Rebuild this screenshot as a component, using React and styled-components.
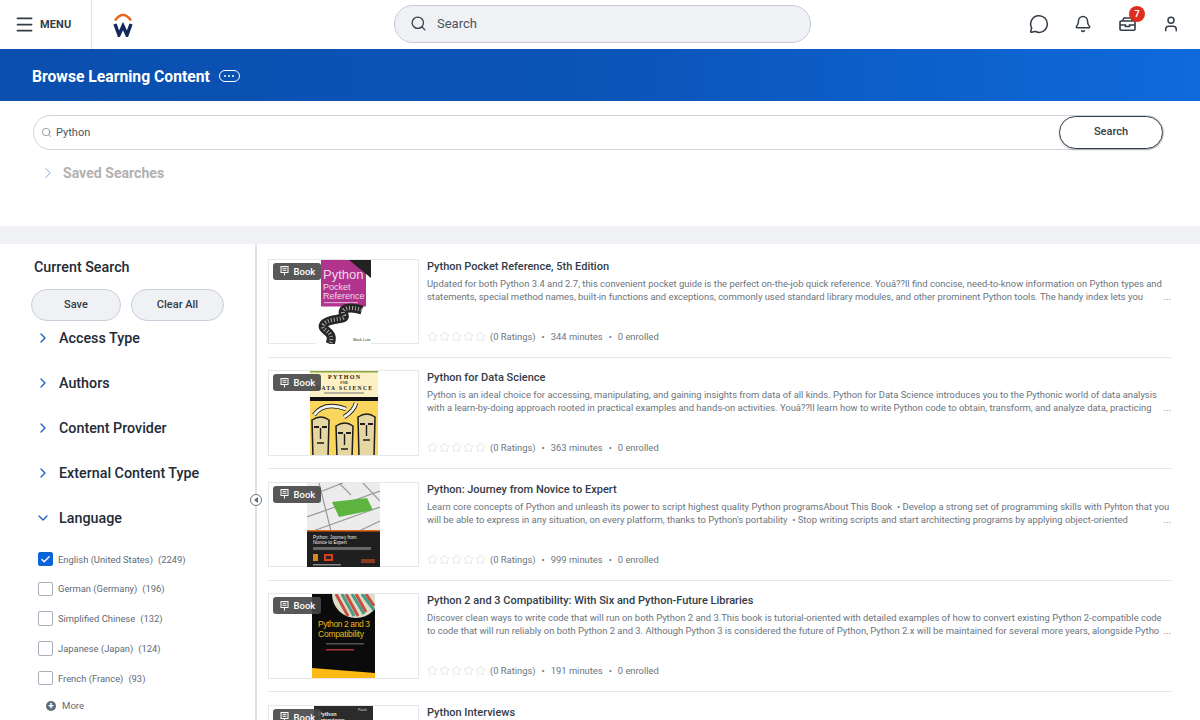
import React from "react";
import styled, { createGlobalStyle } from "styled-components";
import { Menu, Search, MessageCircle, Bell, User, ChevronRight, ChevronDown, Check, Star } from "lucide-react";

const GlobalStyle = createGlobalStyle`
  html, body {
    margin: 0;
    padding: 0;
    background: #fff;
    font-family: Roboto, "Liberation Sans", sans-serif;
    color: #333;
  }
  * { box-sizing: border-box; }
`;

const Page = styled.div`
  width: 1200px;
  height: 720px;
  overflow: hidden;
  display: flex;
  flex-direction: column;
`;

const TopBar = styled.header`
  height: 49px;
  flex: none;
  display: flex;
  align-items: center;
  background: #fff;
  padding-bottom: 2px;
`;

const MenuButton = styled.div`
  width: 92px;
  height: 49px;
  margin-top: 2px;
  padding-left: 14px;
  display: flex;
  align-items: center;
  gap: 5px;
  border-right: 1px solid #dfe2e8;
  font-size: 11px;
  font-weight: 700;
  letter-spacing: 0.1px;
  color: #333c47;
  span,
  svg {
    margin-bottom: 1px;
  }
`;

const LogoWrap = styled.div`
  width: 62px;
  display: flex;
  justify-content: center;
  padding-top: 2px;
`;

const TopSearch = styled.div`
  margin-left: 240px;
  width: 417px;
  height: 38px;
  border-radius: 19px;
  background: #f0f1f5;
  border: 1px solid #c3cad6;
  display: flex;
  align-items: center;
  gap: 10px;
  padding-left: 15px;
  font-size: 13px;
  color: #4a5561;
`;

const TopIcons = styled.div`
  margin-left: 218px;
  display: flex;
  align-items: center;
  gap: 24px;
  color: #333c47;
`;

const IconSlot = styled.div`
  width: 20px;
  height: 20px;
  display: flex;
  align-items: center;
  justify-content: center;
  position: relative;
`;

const Badge = styled.span`
  position: absolute;
  top: -8px;
  right: -8px;
  width: 16px;
  height: 16px;
  border-radius: 50%;
  background: #de2e21;
  color: #fff;
  font-size: 9px;
  font-weight: 700;
  display: flex;
  align-items: center;
  justify-content: center;
`;

const TitleBand = styled.div`
  height: 52px;
  flex: none;
  background: linear-gradient(90deg, #0a4fae 0%, #0b54b8 50%, #0f6adb 100%);
  display: flex;
  align-items: center;
  gap: 9px;
  padding: 2px 0 0 32px;
  color: #fff;
`;

const PageTitle = styled.h1`
  margin: 0;
  font-size: 15.7px;
  font-weight: 700;
`;

const MorePill = styled.span`
  width: 21px;
  height: 12px;
  border: 1px solid #fff;
  border-radius: 6px;
  display: flex;
  align-items: center;
  justify-content: center;
  gap: 2px;
  i {
    width: 2px;
    height: 2px;
    border-radius: 50%;
    background: #fff;
  }
`;

const SearchArea = styled.section`
  height: 125px;
  flex: none;
  padding: 14px 36px 0 33px;
`;

const SearchInput = styled.div`
  height: 35px;
  border: 1px solid #ced3dd;
  border-radius: 18px;
  display: flex;
  align-items: center;
  padding-left: 7px;
  font-size: 11px;
  color: #4a5561;
  gap: 4px;
`;

const Query = styled.span`
  flex: 1;
`;

const SearchButton = styled.button`
  width: 104px;
  height: 33px;
  border: 1px solid #333c47;
  border-radius: 17px;
  background: #fff;
  box-shadow: 0 1px 2px rgba(0, 0, 0, 0.2);
  font: 500 11px Roboto, sans-serif;
  color: #333c47;
  padding: 0 0 2px;
`;

const SavedSearches = styled.div`
  display: flex;
  align-items: center;
  gap: 6.5px;
  margin: 14px 0 0 5.5px;
  font-size: 14.1px;
  font-weight: 700;
  color: #b1b1b1;
`;

const Strip = styled.div`
  height: 18px;
  flex: none;
  background: #f0f1f5;
`;

const Body = styled.div`
  flex: 1;
  min-height: 0;
  display: flex;
  position: relative;
`;

const Sidebar = styled.aside`
  width: 257px;
  flex: none;
  border-right: 2px solid #dfe1e5;
  padding: 15px 0 0 31px;
  overflow: hidden;
`;

const SidebarTitle = styled.h2`
  margin: 0 0 13px 3px;
  font-size: 14.3px;
  font-weight: 500;
  line-height: 17px;
  color: #222b36;
`;

const ButtonRow = styled.div`
  display: flex;
  gap: 10px;
  margin-bottom: 5px;
`;

const PillButton = styled.button`
  width: ${(p) => p.$width}px;
  height: 32px;
  border-radius: 16px;
  border: 1px solid #c9cfda;
  background: #f0f1f5;
  font: 500 11px Roboto, sans-serif;
  color: #333c47;
  padding: 0 0 2px;
`;

const FacetGroup = styled.div`
  display: flex;
  flex-direction: column;
  gap: 21px;
`;

const FacetHead = styled.div`
  height: 24px;
  display: flex;
  align-items: center;
  gap: 8.5px;
  padding-left: 3.5px;
  font-size: 14.3px;
  font-weight: 500;
  color: #222b36;
  svg {
    color: #1a62c5;
  }
`;

const FacetList = styled.div`
  margin-top: 19px;
  display: flex;
  flex-direction: column;
  gap: 9.8px;
  padding-left: 7px;
`;

const FacetItem = styled.div`
  height: 20px;
  display: flex;
  align-items: center;
  gap: 5px;
  font-size: 9.4px;
  color: #5e6a75;
`;

const CheckBox = styled.span`
  width: 14.5px;
  height: 14.5px;
  margin-right: 0.5px;
  border-radius: 2px;
  border: 1px solid ${(p) => (p.$checked ? "#0b64d8" : "#a8b0bb")};
  background: ${(p) => (p.$checked ? "#0b64d8" : "#fff")};
  color: #fff;
  display: flex;
  align-items: center;
  justify-content: center;
`;

const MoreLink = styled.div`
  margin: 12px 0 0 15px;
  display: flex;
  align-items: center;
  gap: 6px;
  font-size: 9.6px;
  line-height: 12px;
  color: #5e6a75;
`;

const PlusDot = styled.span`
  width: 10px;
  height: 10px;
  border-radius: 50%;
  background: #5e6a75;
  color: #fff;
  font-size: 10px;
  font-weight: 700;
  line-height: 10px;
  text-align: center;
`;

const Collapse = styled.div`
  position: absolute;
  left: 250px;
  top: 250px;
  width: 12px;
  height: 12px;
  border-radius: 50%;
  border: 1px solid #6b7580;
  background: #fff;
  display: flex;
  align-items: center;
  justify-content: center;
  &::before {
    content: "";
    border: 3px solid transparent;
    border-right: 4px solid #5e6a75;
    border-left: 0;
  }
`;

const Results = styled.main`
  flex: 1;
  padding: 14.8px 29px 0 11px;
  overflow: hidden;
`;

const Row = styled.article`
  display: flex;
  gap: 8px;
  height: 99px;
  margin-bottom: 12.5px;
  border-bottom: 1px solid #e6e8ec;
`;

const Thumb = styled.div`
  width: 151px;
  height: 85.5px;
  flex: none;
  border: 1px solid #e6e8ec;
  display: flex;
  justify-content: center;
  position: relative;
  svg {
    display: block;
  }
`;

const BookTag = styled.span`
  position: absolute;
  top: 3px;
  left: 4px;
  width: 48px;
  height: 17px;
  border-radius: 3px;
  background: rgba(70, 70, 70, 0.9);
  color: #fff;
  display: flex;
  align-items: center;
  gap: 4.5px;
  padding-left: 7px;
  font-size: 9.5px;
  font-weight: 500;
`;

const Info = styled.div`
  flex: 1;
  min-width: 0;
  display: flex;
  flex-direction: column;
`;

const Title = styled.h3`
  margin: 1px 0 0;
  font-size: 11px;
  font-weight: 500;
  line-height: 14px;
  color: #333c47;
`;

const Desc = styled.div`
  margin-top: 3px;
  font-size: 9.44px;
  line-height: 13px;
  color: #6b7580;
  white-space: pre;
`;

const DescLine = styled.div`
  display: flex;
  justify-content: space-between;
  overflow: hidden;
`;

const Meta = styled.div`
  margin-top: 28px;
  display: flex;
  align-items: center;
  gap: 6px;
  font-size: 9.4px;
  color: #6b7580;
`;

const Stars = styled.span`
  display: flex;
  gap: 1px;
  margin-right: -2px;
  color: #c9cdd2;
`;

const CoverOne = () => (
  <svg width="55" height="84" viewBox="0 0 55 84">
    <rect width="55" height="84" fill="#fff" />
    <rect x="5" width="45" height="46.5" fill="#b0338c" />
    <text x="7" y="19" fontFamily="Liberation Sans, sans-serif" fontSize="13" fill="#f4d9ec">Python</text>
    <text x="7" y="30" fontFamily="Liberation Sans, sans-serif" fontSize="9" fill="#f4d9ec">Pocket</text>
    <text x="7" y="38.5" fontFamily="Liberation Sans, sans-serif" fontSize="9" fill="#f4d9ec">Reference</text>
    <rect x="8" y="42" width="34" height="1.2" fill="#dfa6cf" />
    <path d="M33 0 L55 0 L55 18 Z" fill="#222" />
    <path d="M46 50 C34 46 24 48 28 55 C31 61 14 57 8 64 C3 71 20 70 14 84" fill="none" stroke="#262626" strokeWidth="9" />
    <path d="M46 50 C34 46 24 48 28 55 C31 61 14 57 8 64 C3 71 20 70 14 84" fill="none" stroke="#a8a8a8" strokeWidth="4" strokeDasharray="1 2" />
    <text x="37" y="81" fontFamily="Liberation Sans, sans-serif" fontSize="4" fill="#333">Mark Lutz</text>
  </svg>
);

const Moai = ({ x, top }) => (
  <g>
    <path d={`M${x} ${top + 3} q9 -6 17 0 l-1 ${84 - top} h-15 z`} fill="#e6d7a2" stroke="#1d1d1d" strokeWidth="1.5" />
    <path d={`M${x + 2} ${top + 10} h5 M${x + 10} ${top + 10} h5`} stroke="#1d1d1d" strokeWidth="2" />
    <path d={`M${x + 8.5} ${top + 11} v11 M${x + 5} ${top + 26} h7`} stroke="#1d1d1d" strokeWidth="1.4" fill="none" />
  </g>
);

const CoverTwo = () => (
  <svg width="68" height="84" viewBox="0 0 68 84">
    <rect width="68" height="84" fill="#fad65c" />
    <rect width="68" height="26" fill="#fbf1c4" />
    <rect width="68" height="1.5" fill="#8aa83c" />
    <text x="18" y="8" textLength="32" fontFamily="Liberation Serif, serif" fontWeight="700" fontSize="6" fill="#1a1a1a">PYTHON</text>
    <text x="34" y="12.5" textAnchor="middle" fontFamily="Liberation Serif, serif" fontWeight="700" fontSize="3.5" fill="#1a1a1a">FOR</text>
    <text x="6" y="18.5" textLength="56" fontFamily="Liberation Serif, serif" fontWeight="700" fontSize="5.5" fill="#1a1a1a">DATA SCIENCE</text>
    <rect x="14" y="21.5" width="40" height="1" fill="#777" />
    <rect y="26" width="68" height="4" fill="#111" />
    <Moai x={2} top={46} />
    <Moai x={26} top={52} />
    <Moai x={48} top={43} />
    <path d="M4 44 Q14 30 36 38 M34 46 Q44 40 46 32" stroke="#1d1d1d" strokeWidth="4.5" fill="none" />
    <path d="M4 44 Q14 30 36 38 M34 46 Q44 40 46 32" stroke="#f2f2f2" strokeWidth="2.8" fill="none" />
  </svg>
);

const CoverThree = () => (
  <svg width="73" height="84" viewBox="0 0 73 84">
    <rect width="73" height="48" fill="#ececec" />
    <path d="M0 14 L36 0 M0 34 L73 8 M6 48 L73 24 M73 38 L52 48 M12 0 L24 48 M32 0 L44 12 M56 0 L73 18" stroke="#9a9a9a" strokeWidth="1.2" />
    <path d="M25 19 L60 15 L66 27 L32 34 Z" fill="#5db53f" />
    <rect y="48" width="73" height="36" fill="#1f1f1f" />
    <rect y="47" width="73" height="1.5" fill="#e8641b" />
    <text x="6" y="56" fontFamily="Liberation Sans, sans-serif" fontSize="4.6" fill="#eee">Python: Journey from</text>
    <text x="6" y="61" fontFamily="Liberation Sans, sans-serif" fontSize="4.6" fill="#eee">Novice to Expert</text>
    <rect x="6" y="64" width="58" height="3" fill="#666" />
    <rect x="6" y="71" width="5" height="7" fill="#d88a1c" />
    <rect x="17" y="71" width="9" height="7" fill="#d8401c" />
    <rect x="19" y="73" width="5" height="3" fill="#222" />
    <rect x="54" y="76" width="14" height="4" fill="#8a3a1c" />
    <rect x="6" y="81" width="28" height="1.5" fill="#888" />
  </svg>
);

const CoverFour = () => (
  <svg width="63" height="84" viewBox="0 0 63 84">
    <rect width="63" height="84" fill="#0b0b0b" />
    <clipPath id="disc">
      <circle cx="44" cy="0" r="24" />
    </clipPath>
    <g clipPath="url(#disc)">
      <rect x="15" y="-30" width="60" height="60" fill="#dcdcc8" />
      <path d="M24 0 L36 22 M34 0 L46 22 M44 0 L54 18 M54 0 L62 12" stroke="#c8503c" strokeWidth="3" />
      <path d="M30 0 L42 22 M40 0 L52 20 M50 0 L62 16" stroke="#4a9a8a" strokeWidth="3" />
    </g>
    <text x="6" y="33" textLength="52" fontFamily="Liberation Sans, sans-serif" fontSize="8.5" fill="#e8b818">Python 2 and 3</text>
    <text x="6" y="43" textLength="46" fontFamily="Liberation Sans, sans-serif" fontSize="8.5" fill="#e8b818">Compatibility</text>
    <rect x="14" y="49" width="38" height="1.5" fill="#555" />
    <rect x="14" y="55" width="28" height="1.5" fill="#a33" />
    <path d="M0 74 L63 79 V84 H0 Z" fill="#fdb913" />
  </svg>
);

const CoverFive = () => (
  <svg width="59" height="84" viewBox="0 0 59 84">
    <rect width="59" height="84" fill="#2b2b2b" />
    <text x="44" y="5" fontFamily="Liberation Sans, sans-serif" fontSize="3.5" fill="#ddd">Packt</text>
    <text x="4" y="10" fontFamily="Liberation Sans, sans-serif" fontWeight="700" fontSize="5.5" fill="#eee">Python</text>
    <text x="4" y="16" fontFamily="Liberation Sans, sans-serif" fontWeight="700" fontSize="5.5" fill="#eee">Interviews</text>
  </svg>
);

const books = [
  {
    cover: <CoverOne />,
    title: "Python Pocket Reference, 5th Edition",
    lines: [
      "Updated for both Python 3.4 and 2.7, this convenient pocket guide is the perfect on-the-job quick reference. Youâ??ll find concise, need-to-know information on Python types and",
      "statements, special method names, built-in functions and exceptions, commonly used standard library modules, and other prominent Python tools. The handy index lets you",
    ],
    minutes: 344,
  },
  {
    cover: <CoverTwo />,
    title: "Python for Data Science",
    lines: [
      "Python is an ideal choice for accessing, manipulating, and gaining insights from data of all kinds. Python for Data Science introduces you to the Pythonic world of data analysis",
      "with a learn-by-doing approach rooted in practical examples and hands-on activities. Youâ??ll learn how to write Python code to obtain, transform, and analyze data, practicing",
    ],
    minutes: 363,
  },
  {
    cover: <CoverThree />,
    title: "Python: Journey from Novice to Expert",
    lines: [
      "Learn core concepts of Python and unleash its power to script highest quality Python programsAbout This Book  • Develop a strong set of programming skills with Pyhton that you",
      "will be able to express in any situation, on every platform, thanks to Python's portability  • Stop writing scripts and start architecting programs by applying object-oriented",
    ],
    minutes: 999,
  },
  {
    cover: <CoverFour />,
    title: "Python 2 and 3 Compatibility: With Six and Python-Future Libraries",
    lines: [
      "Discover clean ways to write code that will run on both Python 2 and 3.This book is tutorial-oriented with detailed examples of how to convert existing Python 2-compatible code",
      "to code that will run reliably on both Python 2 and 3. Although Python 3 is considered the future of Python, Python 2.x will be maintained for several more years, alongside Pytho",
    ],
    minutes: 191,
  },
  { cover: <CoverFive />, title: "Python Interviews" },
];

const facets = ["Access Type", "Authors", "Content Provider", "External Content Type"];

const languages = [
  ["English (United States)", "(2249)", true],
  ["German (Germany)", "(196)"],
  ["Simplified Chinese", "(132)"],
  ["Japanese (Japan)", "(124)"],
  ["French (France)", "(93)"],
];

const InboxIcon = () => (
  <svg width="17" height="14" viewBox="0 0 17 14" fill="none" stroke="currentColor" strokeWidth="1.6">
    <path d="M3.5 4 L5 1 H12 L13.5 4" />
    <rect x="1" y="4" width="15" height="9.2" rx="1" />
    <path d="M1 8 H6.5 V9.5 H10.5 V8 H16" />
  </svg>
);

const WorkdayLogo = () => (
  <svg width="20" height="24" viewBox="0 0 20 24" fill="none">
    <path d="M2 7.5 Q10 -3.5 18 7.5" stroke="#e8651c" strokeWidth="2.4" />
    <path d="M2 11 L6 22 L10 13 L14 22 L18 11" stroke="#12285c" strokeWidth="3.4" />
  </svg>
);

const SlideIcon = () => (
  <svg width="9" height="10" viewBox="0 0 9 10" fill="none" stroke="#fff" strokeWidth="1">
    <rect x="1" y="0.5" width="7" height="6" />
    <path d="M2.5 2.3 H6.5 M2.5 4.3 H6.5 M4.5 6.5 V9.5" />
  </svg>
);

const App = () => (
  <Page>
    <GlobalStyle />
    <TopBar>
      <MenuButton>
        <Menu size={21} strokeWidth={2} />
        <span>MENU</span>
      </MenuButton>
      <LogoWrap>
        <WorkdayLogo />
      </LogoWrap>
      <TopSearch>
        <Search size={17} strokeWidth={1.8} color="#333c47" />
        Search
      </TopSearch>
      <TopIcons>
        <IconSlot>
          <MessageCircle size={22} strokeWidth={1.8} />
        </IconSlot>
        <IconSlot>
          <Bell size={18} strokeWidth={2} />
        </IconSlot>
        <IconSlot>
          <InboxIcon />
          <Badge>7</Badge>
        </IconSlot>
        <IconSlot>
          <User size={18} strokeWidth={2} />
        </IconSlot>
      </TopIcons>
    </TopBar>
    <TitleBand>
      <PageTitle>Browse Learning Content</PageTitle>
      <MorePill>
        <i />
        <i />
        <i />
      </MorePill>
    </TitleBand>
    <SearchArea>
      <SearchInput>
        <Search size={11} strokeWidth={1.5} color="#6b7580" />
        <Query>Python</Query>
        <SearchButton>Search</SearchButton>
      </SearchInput>
      <SavedSearches>
        <ChevronRight size={18} strokeWidth={1.3} color="#7aa6e6" />
        Saved Searches
      </SavedSearches>
    </SearchArea>
    <Strip />
    <Body>
      <Sidebar>
        <SidebarTitle>Current Search</SidebarTitle>
        <ButtonRow>
          <PillButton $width={90}>Save</PillButton>
          <PillButton $width={93}>Clear All</PillButton>
        </ButtonRow>
        <FacetGroup>
          {facets.map((name) => (
            <FacetHead key={name}>
              <ChevronRight size={16} strokeWidth={2} />
              {name}
            </FacetHead>
          ))}
          <FacetHead>
            <ChevronDown size={16} strokeWidth={2} />
            Language
          </FacetHead>
        </FacetGroup>
        <FacetList>
          {languages.map(([name, count, checked]) => (
            <FacetItem key={name}>
              <CheckBox $checked={checked}>{checked && <Check size={11} strokeWidth={3} />}</CheckBox>
              <span>{name}</span>
              <span>{count}</span>
            </FacetItem>
          ))}
        </FacetList>
        <MoreLink>
          <PlusDot>+</PlusDot>
          More
        </MoreLink>
      </Sidebar>
      <Collapse />
      <Results>
        {books.map((book) => (
          <Row key={book.title}>
            <Thumb>
              {book.cover}
              <BookTag>
                <SlideIcon />
                Book
              </BookTag>
            </Thumb>
            <Info>
              <Title>{book.title}</Title>
              {book.lines && (
                <>
                  <Desc>
                    {book.lines.map((line, i) => (
                      <DescLine key={i}>
                        <span>{line}</span>
                        {i === 1 && <span>...</span>}
                      </DescLine>
                    ))}
                  </Desc>
                  <Meta>
                    <Stars>
                      {[0, 1, 2, 3, 4].map((i) => (
                        <Star key={i} size={11} strokeWidth={1} />
                      ))}
                    </Stars>
                    <span>(0 Ratings)</span>
                    <span>•</span>
                    <span>{book.minutes} minutes</span>
                    <span>•</span>
                    <span>0 enrolled</span>
                  </Meta>
                </>
              )}
            </Info>
          </Row>
        ))}
      </Results>
    </Body>
  </Page>
);

export default App;
